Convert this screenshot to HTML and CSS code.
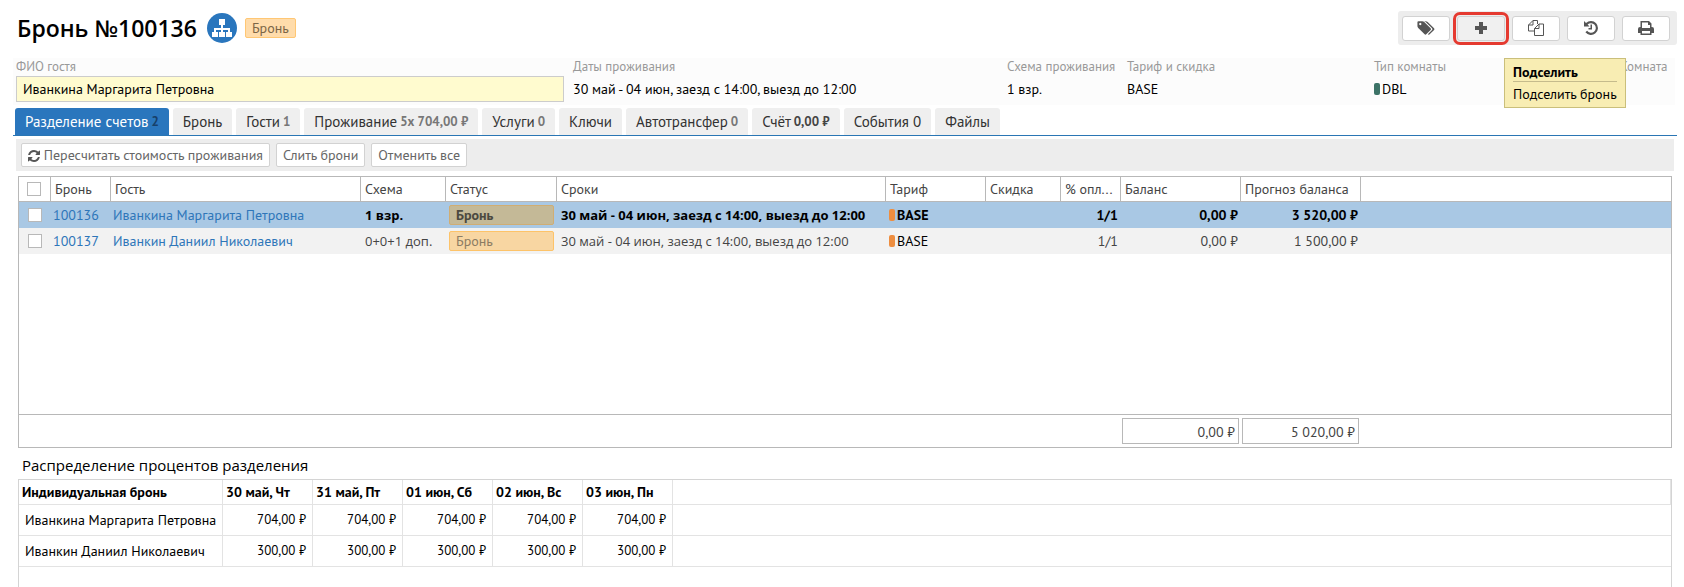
FILE: index.html
```
<!DOCTYPE html>
<html lang="ru">
<head>
    <meta charset="UTF-8">
    <meta name="viewport" content="width=device-width, initial-scale=1.0">
    <title>Бронь №100136</title>
    <link rel="stylesheet" href="styles.css">
</head>
<body>
    <header class="page-header">
        <h1>Бронь №100136</h1>
        <button class="group-button" type="button" aria-label="Группа">
            <svg width="20" height="18" viewBox="0 0 20 18" fill="#fff"><path d="M7 0h6v6h-2v3h7v4h2v5h-6v-5h2v-2h-5v2h2v5H7v-5h2v-2H4v2h2v5H0v-5h2V9h7V6H7z"/></svg>
        </button>
        <span class="badge">Бронь</span>
        <div class="actions">
            <button class="action" type="button" aria-label="Метки">
                <svg width="18" height="16" viewBox="0 0 1920 1792"><path transform="matrix(1 0 0 -1 0 1536)" d="M448 1088q0 53-37.500 90.500t-90.500 37.500-90.500-37.500-37.500-90.500 37.500-90.500 90.500-37.500 90.500 37.500 37.500 90.500zM1515 512q0-53-37-90l-491-492q-39-37-91-37-53 0-90 37l-715 716q-38 37-64.500 101t-26.500 117v416q0 52 38 90t90 38h416q53 0 117-26.500t102-64.500l715-714q37-39 37-91zM1899 512q0-53-37-90l-491-492q-39-37-91-37-36 0-59 14t-53 45l470 470q37 37 37 90 0 52-37 91l-715 714q-38 38-102 64.500t-117 26.500h224q53 0 117-26.500t102-64.500l715-714q37-39 37-91z"/></svg>
            </button>
            <div class="action-wrap">
                <button class="action action-active" type="button" aria-label="Подселить">
                    <svg width="14" height="14" viewBox="0 0 14 14"><path d="M5 1h4v4h4v4H9v4H5V9H1V5h4z"/></svg>
                </button>
                <div class="tooltip">
                    <strong>Подселить</strong>
                    <span>Подселить бронь</span>
                </div>
            </div>
            <button class="action" type="button" aria-label="Копировать">
                <svg width="16" height="16" viewBox="0 0 16 16" fill="none" stroke="#555"><path d="M6 11H.5V5L5 .5h4.500V4M5 .5V5H.5M6.500 8.500L11 4h4.500v11.500h-9zM11 4v4.500H6.500"/></svg>
            </button>
            <button class="action" type="button" aria-label="История">
                <svg width="16" height="16" viewBox="0 0 16 16"><path d="M1 1l2 2a7 7 0 1 1-.6 9.200l1.700-1.400A4.800 4.800 0 1 0 4.600 4.600L6.500 6.500H1zM7.500 4.500H9V9.500H5.500V8h2z"/></svg>
            </button>
            <button class="action" type="button" aria-label="Печать">
                <svg width="16" height="16" viewBox="0 0 16 16"><path fill-rule="evenodd" d="M2.500 1h8.500l2.500 2.500V7h.5a2 2 0 0 1 2 2v4h-2.500v2h-11v-2H0V9a2 2 0 0 1 2-2h.5zM4 2.500V8h8V5h-2V2.500zM4 11v2.500h8V11z"/></svg>
            </button>
        </div>
    </header>

    <section class="info">
        <div class="field">
            <label for="guest">ФИО гостя</label>
            <input type="text" id="guest" value="Иванкина Маргарита Петровна">
        </div>
        <div class="field">
            <span class="caption">Даты проживания</span>
            <span class="value">30 май - 04 июн, заезд с 14:00, выезд до 12:00</span>
        </div>
        <div class="field">
            <span class="caption">Схема проживания</span>
            <span class="value">1 взр.</span>
        </div>
        <div class="field">
            <span class="caption">Тариф и скидка</span>
            <span class="value">BASE</span>
        </div>
        <div class="field">
            <span class="caption">Тип комнаты</span>
            <span class="value"><i class="chip chip-green"></i>DBL</span>
        </div>
        <div class="field">
            <span class="caption">Комната</span>
        </div>
    </section>

    <nav class="tabs">
        <a href="#" class="tab tab-active">Разделение счетов <b>2</b></a>
        <a href="#" class="tab">Бронь</a>
        <a href="#" class="tab">Гости <b>1</b></a>
        <a href="#" class="tab">Проживание <b>5х 704,00 ₽</b></a>
        <a href="#" class="tab">Услуги <b>0</b></a>
        <a href="#" class="tab">Ключи</a>
        <a href="#" class="tab">Автотрансфер <b>0</b></a>
        <a href="#" class="tab">Счёт <b class="dark">0,00 ₽</b></a>
        <a href="#" class="tab">События 0</a>
        <a href="#" class="tab">Файлы</a>
    </nav>

    <div class="toolbar">
        <button type="button">
            <svg width="12" height="12" viewBox="0 0 1536 1536" fill="#555"><path transform="matrix(1 0 0 -1 0 1408)" d="M1511 480q0-5-1-7-64-268-268-434.500t-478-166.500q-146 0-282.500 55t-243.500 157l-129-129q-19-19-45-19t-45 19-19 45v448q0 26 19 45t45 19h448q26 0 45-19t19-45-19-45l-137-137q71-66 161-102t187-36q134 0 250 65t186 179q11 17 53 117 8 23 30 23h192q13 0 22.500-9.500t9.500-22.500zM1536 1280v-448q0-26-19-45t-45-19h-448q-26 0-45 19t-19 45 19 45l138 138q-148 137-349 137-134 0-250-65t-186-179q-11-17-53-117-8-23-30-23h-199q-13 0-22.500 9.500t-9.500 22.500v7q65 268 270 434.500t480 166.500q146 0 284-55.500t245-156.500l130 129q19 19 45 19t45-19 19-45z"/></svg>
            Пересчитать стоимость проживания
        </button>
        <button type="button">Слить брони</button>
        <button type="button">Отменить все</button>
    </div>

    <div class="grid">
        <div class="grid-body">
            <table class="bookings">
                <colgroup>
                    <col class="w-check"><col class="w-60"><col class="w-guest"><col class="w-scheme"><col class="w-status"><col class="w-dates">
                    <col class="w-rate"><col class="w-discount"><col class="w-60"><col class="w-sum"><col class="w-sum"><col>
                </colgroup>
                <thead>
                    <tr>
                        <th class="check"><input type="checkbox" aria-label="Выбрать все"></th>
                        <th>Бронь</th>
                        <th>Гость</th>
                        <th>Схема</th>
                        <th>Статус</th>
                        <th>Сроки</th>
                        <th>Тариф</th>
                        <th>Скидка</th>
                        <th>% опл...</th>
                        <th>Баланс</th>
                        <th>Прогноз баланса</th>
                        <th></th>
                    </tr>
                </thead>
                <tbody>
                    <tr class="selected">
                        <td class="check"><input type="checkbox" aria-label="100136"></td>
                        <td class="link"><a href="#">100136</a></td>
                        <td class="link"><a href="#">Иванкина Маргарита Петровна</a></td>
                        <td class="wide">1 взр.</td>
                        <td class="status"><span>Бронь</span></td>
                        <td class="wide">30 май - 04 июн, заезд с 14:00, выезд до 12:00</td>
                        <td class="rate"><i class="chip chip-orange"></i>BASE</td>
                        <td></td>
                        <td class="num">1/1</td>
                        <td class="num">0,00 ₽</td>
                        <td class="num">3 520,00 ₽</td>
                        <td></td>
                    </tr>
                    <tr class="odd">
                        <td class="check"><input type="checkbox" aria-label="100137"></td>
                        <td class="link"><a href="#">100137</a></td>
                        <td class="link"><a href="#">Иванкин Даниил Николаевич</a></td>
                        <td class="wide">0+0+1 доп.</td>
                        <td class="status"><span>Бронь</span></td>
                        <td class="wide">30 май - 04 июн, заезд с 14:00, выезд до 12:00</td>
                        <td class="rate"><i class="chip chip-orange"></i>BASE</td>
                        <td></td>
                        <td class="num">1/1</td>
                        <td class="num">0,00 ₽</td>
                        <td class="num">1 500,00 ₽</td>
                        <td></td>
                    </tr>
                </tbody>
            </table>
        </div>
        <div class="grid-footer">
            <output>0,00 ₽</output>
            <output>5 020,00 ₽</output>
        </div>
    </div>

    <h2>Распределение процентов разделения</h2>
    <div class="split">
        <table class="shares">
            <colgroup>
                <col class="w-name"><col class="w-day"><col class="w-day"><col class="w-day"><col class="w-day"><col class="w-day"><col>
            </colgroup>
            <thead>
                <tr>
                    <th>Индивидуальная бронь</th>
                    <th>30 май, Чт</th>
                    <th>31 май, Пт</th>
                    <th>01 июн, Сб</th>
                    <th>02 июн, Вс</th>
                    <th>03 июн, Пн</th>
                    <th></th>
                </tr>
            </thead>
            <tbody>
                <tr>
                    <td>Иванкина Маргарита Петровна</td>
                    <td class="num">704,00 ₽</td>
                    <td class="num">704,00 ₽</td>
                    <td class="num">704,00 ₽</td>
                    <td class="num">704,00 ₽</td>
                    <td class="num">704,00 ₽</td>
                    <td></td>
                </tr>
                <tr>
                    <td>Иванкин Даниил Николаевич</td>
                    <td class="num">300,00 ₽</td>
                    <td class="num">300,00 ₽</td>
                    <td class="num">300,00 ₽</td>
                    <td class="num">300,00 ₽</td>
                    <td class="num">300,00 ₽</td>
                    <td></td>
                </tr>
            </tbody>
        </table>
    </div>
</body>
</html>
```
FILE: styles.css
```
* {
    box-sizing: border-box;
}
html {
    height: 100%;
}
body {
    display: flex;
    flex-direction: column;
    min-height: 100%;
    margin: 0;
    padding: 11px 12px 0 18px;
    font-family: 'PT Sans', 'Noto Sans', sans-serif;
    font-size: 14px;
    line-height: 18px;
    color: #000;
    background: #fff;
}
button, input {
    font: inherit;
}
.page-header {
    display: flex;
    align-items: center;
    height: 34px;
    margin-right: -5px;
}
h1 {
    margin: 0 10px 0 -1px;
    font-family: 'Open Sans', sans-serif;
    font-size: 23px;
    font-weight: 600;
}
.group-button {
    display: flex;
    align-items: center;
    justify-content: center;
    width: 30px;
    height: 30px;
    margin-right: 8px;
    padding: 0;
    border: none;
    border-radius: 50%;
    background: #2a76bd;
}
.badge {
    padding: 0 6px;
    border: 1px solid #ffc774;
    border-radius: 2px;
    background: #ffdcab;
    color: #7b6647;
}
.actions {
    display: flex;
    align-items: center;
    gap: 7px;
    height: 34px;
    margin-left: auto;
    padding: 0 7px 0 4px;
    border-radius: 3px;
    background: #ededed;
}
.action {
    display: flex;
    align-items: center;
    justify-content: center;
    width: 48px;
    height: 25px;
    padding: 0;
    border: 1px solid #d2d2d2;
    border-radius: 3px;
    background: #fff;
    fill: #555;
}
.action-wrap {
    position: relative;
}
.action-active {
    background: #f0f0f0;
    outline: 3px solid #e53a30;
    outline-offset: 1px;
}
.tooltip {
    position: absolute;
    z-index: 1;
    top: 42px;
    left: 47px;
    width: 122px;
    padding: 4px 8px;
    border: 1px solid #cabf7b;
    background: #f8edb3;
    white-space: nowrap;
}
.tooltip strong {
    display: block;
    margin-bottom: 3px;
    border-bottom: 1px solid #c5bb8c;
}
.info {
    display: grid;
    grid-template-columns: 557fr 434fr 120fr 247fr 246fr 48fr;
    height: 47px;
    margin: 13px -3px 0 -5px;
    padding: 0 7px 0 3px;
    background: #fcfcfc;
}
.field label, .caption, .value {
    display: block;
    white-space: nowrap;
}
.field label, .caption {
    color: #999;
    font-size: 13px;
}
.field input {
    display: block;
    width: 548px;
    height: 26px;
    padding: 0 6px;
    border: 1px solid #ccc;
    background: #fffbcf;
}
.value {
    line-height: 26px;
}
.chip {
    display: inline-block;
    width: 6px;
    height: 12px;
    margin-right: 2px;
    border-radius: 2px;
    vertical-align: -1px;
}
.chip-green {
    background: #3d7367;
}
.chip-orange {
    background: #ee8e40;
}
.tabs {
    display: flex;
    gap: 4px;
    margin: 3px -5px 0 -5px;
    padding-left: 2px;
    border-bottom: 1px solid #2a76b4;
}
.tab {
    height: 27px;
    padding: 0 10px;
    border-radius: 3px 3px 0 0;
    background: #efefef;
    color: #333;
    font-size: 15px;
    line-height: 28px;
    text-decoration: none;
    white-space: nowrap;
}
.tab b {
    margin-left: -1px;
    color: #777;
    font-size: 13px;
    line-height: 1;
    vertical-align: 1px;
}
.tab b.dark {
    color: #444;
}
.tab-active {
    background: #2a76bd;
    color: #fff;
}
.tab-active b {
    color: #174069;
}
.toolbar {
    display: flex;
    gap: 6px;
    margin: 3px -2px 5px;
    padding: 4px 5px;
    background: #ededed;
}
.toolbar button {
    height: 24px;
    padding: 0 6px;
    border: 1px solid #d2d2d2;
    border-radius: 2px;
    background: #fff;
    color: #666;
    white-space: nowrap;
}
.toolbar svg {
    vertical-align: -2px;
}
.grid {
    border: 1px solid #b8b8b8;
}
.grid-body {
    min-height: 237px;
}
table {
    width: 100%;
    border-collapse: separate;
    border-spacing: 0;
    table-layout: fixed;
}
th, td {
    overflow: hidden;
    text-align: left;
    text-overflow: ellipsis;
    white-space: nowrap;
}
.bookings th {
    height: 25px;
    padding: 0 4px;
    border-right: 1px solid #b8b8b8;
    border-bottom: 1px solid #b8b8b8;
    color: #444;
    font-weight: 400;
}
.bookings th:last-child {
    border-right: none;
}
.bookings td {
    height: 26px;
    padding: 0 5px 0 4px;
    color: #444;
}
.bookings .check {
    padding: 0 1px 0 0;
    text-align: center;
}
.check input {
    display: block;
    width: 14px;
    height: 14px;
    margin: 0 auto;
    border: 1px solid #b8b8b8;
    background: #fff;
    appearance: none;
}
.bookings .link {
    padding: 0 2px;
}
.link a {
    color: #2e76b9;
    text-decoration: none;
}
.bookings .wide {
    padding-right: 0;
    font-family: 'Open Sans', sans-serif;
    font-size: 13px;
}
.bookings .selected td {
    background: #a9c8e4;
    color: #000;
    font-weight: 700;
}
.bookings .selected .link {
    font-weight: 400;
}
.odd td {
    background: #f2f2f2;
}
.bookings .status {
    padding: 0 3px;
}
.status span {
    display: block;
    height: 20px;
    padding: 0 6px;
    border: 1px solid #fdc369;
    border-radius: 2px;
    background: #f8d6a2;
    color: #8c7c63;
}
.selected .status span {
    border-color: #d0ad73;
    background: #c4b997;
    color: #4c4a40;
}
.bookings .rate {
    padding: 0 3px;
    color: #000;
}
.bookings .num, .shares .num {
    text-align: right;
    text-overflow: clip;
}
.bookings .num {
    padding: 0 3px;
}
.w-check { width: 32px; }
.w-60 { width: 60px; }
.w-guest { width: 250px; }
.w-scheme { width: 85px; }
.w-status { width: 111px; }
.w-dates { width: 329px; }
.w-rate { width: 100px; }
.w-discount { width: 75px; }
.w-sum { width: 120px; }
.w-name { width: 204px; }
.w-day { width: 90px; }
.grid-footer {
    display: flex;
    gap: 3px;
    height: 33px;
    padding: 3px 0 3px 1103px;
    border-top: 1px solid #b8b8b8;
}
.grid-footer output {
    width: 117px;
    height: 26px;
    padding: 0 3px;
    border: 1px solid #b8b8b8;
    color: #444;
    line-height: 26px;
    text-align: right;
}
h2 {
    margin: 7px 4px 4px;
    font-family: 'Open Sans', sans-serif;
    font-size: 15px;
    font-weight: 500;
    line-height: 20px;
}
.split {
    flex: 1;
    border: 1px solid #d4d4d4;
    border-bottom: none;
}
.shares th, .shares td {
    border-right: 1px solid #e3e3e3;
    border-bottom: 1px solid #e3e3e3;
}
.shares th {
    height: 25px;
    padding: 0 3px;
}
.shares td {
    height: 31px;
    padding: 0 0 0 6px;
}
.shares .num {
    padding: 0 6px;
    font-size: 13px;
}
.shares td:last-child {
    border-right: none;
}
```
